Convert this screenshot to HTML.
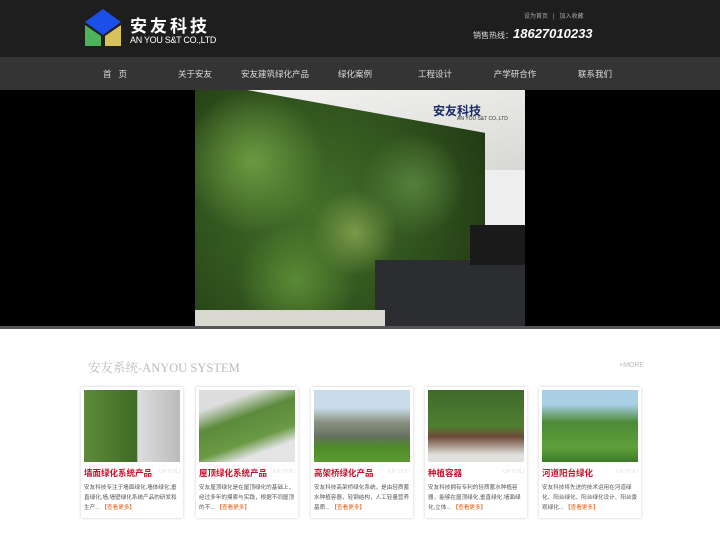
<!DOCTYPE html>
<html><head><meta charset="utf-8"><style>
*{margin:0;padding:0;box-sizing:border-box}
body{width:720px;height:540px;overflow:hidden;background:#fff;font-family:"Liberation Sans","Noto Sans CJK SC",sans-serif}
.hd{position:absolute;left:0;top:0;width:720px;height:57px;background:#1e1e1e}
.nav{position:absolute;left:0;top:57px;width:720px;height:33px;background:#343434}
.nav span{position:absolute;top:11px;font-size:8.5px;color:#ddd;transform:translateX(-50%);white-space:nowrap}
.ban{position:absolute;left:0;top:90px;width:720px;height:238px;background:#000}
.pic{position:absolute;left:195px;top:0;width:330px;height:238px;overflow:hidden;background:#eee}
.card{position:absolute;top:387px;width:102px;height:131px;background:#fff;box-shadow:0 0 3px rgba(0,0,0,.2)}
.card .im{position:absolute;left:3px;top:3px;width:96px;height:72px}
.card h4{position:absolute;left:3px;top:80px;font-size:8.5px;color:#c4122f;font-weight:bold}
.card i{position:absolute;right:3px;top:82px;font-size:6px;color:#ddd;font-style:normal;font-family:"Liberation Serif",serif}
.card p{position:absolute;left:3px;top:96px;width:97px;font-size:5.6px;line-height:10px;color:#555}
.card p b{color:#e05a10;font-weight:normal}
</style></head><body>
<div class="hd">
 <svg style="position:absolute;left:84px;top:9px" width="40" height="38"><polygon points="19,0 37,13 19,26 1,13" fill="#1a4fe8"/><polygon points="1,16 17,27 17,37 1,37" fill="#4db35a"/><polygon points="21,27 37,16 37,37 21,37" fill="#d8c05a"/></svg>
 <div style="position:absolute;left:130px;top:12px;font-size:17px;color:#fff;font-weight:bold;letter-spacing:3px">安友科技</div>
 <div style="position:absolute;left:130px;top:35px;font-size:9px;color:#fff;letter-spacing:-.3px">AN YOU S&amp;T CO.,LTD</div>
 <div style="position:absolute;left:524px;top:11px;font-size:6px;color:#aaa">设为首页 &nbsp; | &nbsp; 加入收藏</div>
 <div style="position:absolute;left:473px;top:26px;font-size:8px;color:#ddd">销售热线：<span style="font-size:13px;font-style:italic;font-weight:bold;color:#fff">18627010233</span></div>
</div>
<div class="nav">
 <span style="left:115px">首 &nbsp; 页</span><span style="left:195px">关于安友</span><span style="left:275px">安友建筑绿化产品</span><span style="left:355px">绿化案例</span><span style="left:435px">工程设计</span><span style="left:515px">产学研合作</span><span style="left:595px">联系我们</span>
</div>
<div class="ban"><div class="pic">
 <div style="position:absolute;left:0;top:0;width:330px;height:80px;background:linear-gradient(170deg,#f4f4f2,#d8d8d4)"></div>
 <div style="position:absolute;left:0;top:0;width:290px;height:238px;background:radial-gradient(circle at 20% 30%,#6c9a40 0,transparent 25%),radial-gradient(circle at 55% 60%,#7a9a48 0,transparent 20%),radial-gradient(circle at 35% 80%,#5a8a34 0,transparent 22%),radial-gradient(circle at 75% 40%,#55803a 0,transparent 20%),radial-gradient(circle at 40% 50%,#44702a,#2e4f1c 60%,#1e3312);clip-path:polygon(0 0,18% 0,100% 18%,100% 70%,80% 75%,70% 100%,0 100%)"></div>
 <div style="position:absolute;left:180px;top:170px;width:150px;height:68px;background:#2b2d31"></div>
 <div style="position:absolute;left:0;top:220px;width:190px;height:18px;background:#d8d8d0"></div>
 <div style="position:absolute;left:275px;top:135px;width:55px;height:40px;background:#1a1a1a"></div>
 <div style="position:absolute;left:238px;top:12px;font-size:12px;font-weight:bold;color:#1a2a6a">安友科技</div>
 <div style="position:absolute;left:262px;top:26px;font-size:5px;color:#333">AN YOU S&amp;T CO.,LTD</div>
</div></div>
<div style="position:absolute;left:0;top:326px;width:720px;height:3px;background:#555"></div>
<div style="position:absolute;left:88px;top:358px;font-size:12.5px;color:#bbb;font-family:'Liberation Serif','Noto Serif CJK SC',serif">安友系统-ANYOU SYSTEM</div>
<div style="position:absolute;left:619px;top:362px;font-size:7px;color:#bbb">+MORE</div>

<div class="card" style="left:81px"><div class="im" style="background:linear-gradient(90deg,#5f8a3a,#3e6b26 55%,#ddd 56%,#bbb)"></div><h4>墙面绿化系统产品</h4><i>AN YOU</i><p>安友科技专注于墙面绿化,墙体绿化,垂直绿化,墙,墙壁绿化系统产品的研发和生产... <b>【查看更多】</b></p></div>
<div class="card" style="left:196px"><div class="im" style="background:linear-gradient(160deg,#ddd 20%,#5c8a3c 40%,#6a9a44 65%,#e4e4e4 80%)"></div><h4>屋顶绿化系统产品</h4><i>AN YOU</i><p>安友屋顶绿化是在屋顶绿化的基础上，经过多年的摸索与实践，根据不同屋顶的不... <b>【查看更多】</b></p></div>
<div class="card" style="left:311px"><div class="im" style="background:linear-gradient(180deg,#c9dbe8 25%,#8a9180 45%,#667060 65%,#4f8a2a 78%,#5a9a30)"></div><h4>高架桥绿化产品</h4><i>AN YOU</i><p>安友科技高架桥绿化系统，是由轻质蓄水种植容器，轻钢结构，人工轻量营养基质... <b>【查看更多】</b></p></div>
<div class="card" style="left:425px"><div class="im" style="background:linear-gradient(180deg,#3e6a2a,#4f7f32 50%,#6e4a38 65%,#e0e0dc 90%)"></div><h4>种植容器</h4><i>AN YOU</i><p>安友科技拥有专利的轻质蓄水种植容器，能够在屋顶绿化,垂直绿化,墙面绿化,立体... <b>【查看更多】</b></p></div>
<div class="card" style="left:539px"><div class="im" style="background:linear-gradient(180deg,#a8cfe6 20%,#4d8a36 45%,#5ea03a 80%,#3c7a2a)"></div><h4>河道阳台绿化</h4><i>AN YOU</i><p>安友科技将先进的技术运用在河道绿化、阳台绿化、阳台绿化设计、阳台景观绿化... <b>【查看更多】</b></p></div>
</body></html>
